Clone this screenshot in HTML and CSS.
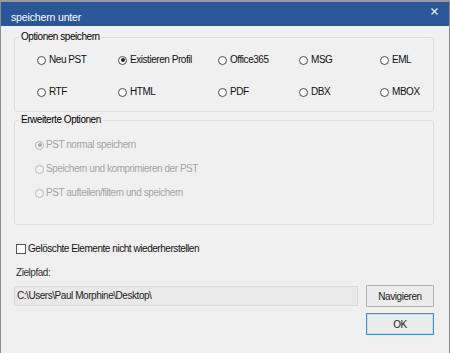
FILE: index.html
```html
<!DOCTYPE html>
<html lang="de">
<head>
    <meta charset="utf-8">
    <title>speichern unter</title>
    <link rel="stylesheet" href="styles.css">
</head>
<body>
<div class="window">
    <div class="titlebar">
        <span class="titlebar__text">speichern unter</span>
        <svg class="titlebar__close" width="7" height="7" viewBox="0 0 7 7">
            <path d="M0.5 0.5 L6.5 6.5 M6.5 0.5 L0.5 6.5" stroke="#e4e8f0" stroke-width="1.4"/>
        </svg>
    </div>
    <div class="content">
        <fieldset class="group">
            <legend class="group__legend">Optionen speichern</legend>
            <div class="formatGrid">
                <label class="option"><span class="radio"></span>Neu PST</label>
                <label class="option"><span class="radio radio_checked"></span>Existieren Profil</label>
                <label class="option"><span class="radio"></span>Office365</label>
                <label class="option"><span class="radio"></span>MSG</label>
                <label class="option"><span class="radio"></span>EML</label>
                <label class="option"><span class="radio"></span>RTF</label>
                <label class="option"><span class="radio"></span>HTML</label>
                <label class="option"><span class="radio"></span>PDF</label>
                <label class="option"><span class="radio"></span>DBX</label>
                <label class="option"><span class="radio"></span>MBOX</label>
            </div>
        </fieldset>
        <fieldset class="group group_advanced">
            <legend class="group__legend">Erweiterte Optionen</legend>
            <div class="advancedList">
                <label class="option option_disabled"><span class="radio radio_checked"></span>PST normal speichern</label>
                <label class="option option_disabled"><span class="radio"></span>Speichern und komprimieren der PST</label>
                <label class="option option_disabled"><span class="radio"></span>PST aufteilen/filtern und speichern</label>
            </div>
        </fieldset>
        <label class="checkRow"><span class="checkbox"></span>Gelöschte Elemente nicht wiederherstellen</label>
        <div class="pathLabel">Zielpfad:</div>
        <div class="pathRow">
            <div class="pathBox">C:\Users\Paul Morphine\Desktop\</div>
            <button class="button">Navigieren</button>
        </div>
        <div class="okRow">
            <button class="button button_primary">OK</button>
        </div>
    </div>
</div>
</body>
</html>
```

FILE: styles.css
```css
body {
    margin: 0;
    padding: 0;
    font-family: 'Liberation Sans', Arial, sans-serif;
    font-size: 10px;
    letter-spacing: -0.45px;
    color: #111;
}

.window {
    width: 450px;
    height: 353px;
    box-sizing: border-box;
    background: #f0f0f0;
    border: 1px solid #8c8c8c;
    border-top: 2px solid #9a9a9a;
    border-bottom: none;
    display: flex;
    flex-direction: column;
}

.titlebar {
    height: 24px;
    background: #2b579a;
    color: #fff;
    display: flex;
    justify-content: space-between;
    align-items: flex-start;
    padding: 0 11px 0 10px;
    flex-shrink: 0;
}

.titlebar__text {
    font-size: 10.5px;
    letter-spacing: -0.15px;
    line-height: 12px;
    padding-top: 9px;
}

.titlebar__close {
    margin-top: 6px;
}

.content {
    padding: 5px 15px 0 13px;
    display: flex;
    flex-direction: column;
}

.group {
    margin: 0;
    border: 1px solid #dcdcdc;
    border-radius: 3px;
    padding: 10px 0 12px 4px;
    min-width: 0;
}

.group__legend {
    padding: 0 2px;
    line-height: 12px;
    color: #000;
}

.formatGrid {
    padding-left: 18px;
    display: grid;
    grid-template-columns: 81px 100px 81px 81px auto;
    row-gap: 18px;
}

.group_advanced {
    margin-top: 2px;
    padding: 12px 0 24px 4px;
}

.advancedList {
    padding-left: 16px;
    display: flex;
    flex-direction: column;
    gap: 10px;
}

.option {
    display: flex;
    align-items: center;
    gap: 3px;
    line-height: 14px;
    height: 14px;
    white-space: nowrap;
}

.option_disabled {
    color: #a3a3a3;
    gap: 2px;
}

.radio {
    width: 9px;
    height: 9px;
    box-sizing: border-box;
    border: 1px solid #4d4d4d;
    border-radius: 50%;
    background: #fff;
    display: flex;
    align-items: center;
    justify-content: center;
    flex-shrink: 0;
}

.radio_checked:after {
    content: '';
    width: 4px;
    height: 4px;
    border-radius: 50%;
    background: #222;
}

.option_disabled .radio {
    border-color: #b5b5b5;
    background: #f4f4f4;
}

.option_disabled .radio_checked:after {
    background: #a8a8a8;
}

.checkRow {
    margin-top: 17px;
    margin-left: 2px;
    display: flex;
    align-items: center;
    gap: 2px;
    height: 14px;
    line-height: 14px;
}

.checkbox {
    width: 10px;
    height: 10px;
    box-sizing: border-box;
    border: 1px solid #555;
    background: #fff;
}

.pathLabel {
    margin-top: 10px;
    margin-left: 2px;
    height: 14px;
    line-height: 14px;
    color: #333;
}

.pathRow {
    margin-top: 5px;
    display: flex;
    align-items: center;
    gap: 8px;
}

.pathBox {
    width: 344px;
    height: 20px;
    box-sizing: border-box;
    border: 1px solid #dadada;
    background: #e9e9e9;
    line-height: 18px;
    padding-left: 2px;
    color: #222;
}

.button {
    width: 68px;
    height: 22px;
    box-sizing: border-box;
    border: 1px solid #b3b3b3;
    background: #ececec;
    font-family: inherit;
    font-size: 10px;
    letter-spacing: -0.45px;
    color: #222;
    padding: 0;
}

.button_primary {
    border: 1px solid #3c8ee0;
    box-shadow: inset 0 0 0 1px #c9dff5;
}

.okRow {
    margin-top: 6px;
    display: flex;
    justify-content: flex-end;
}
```
